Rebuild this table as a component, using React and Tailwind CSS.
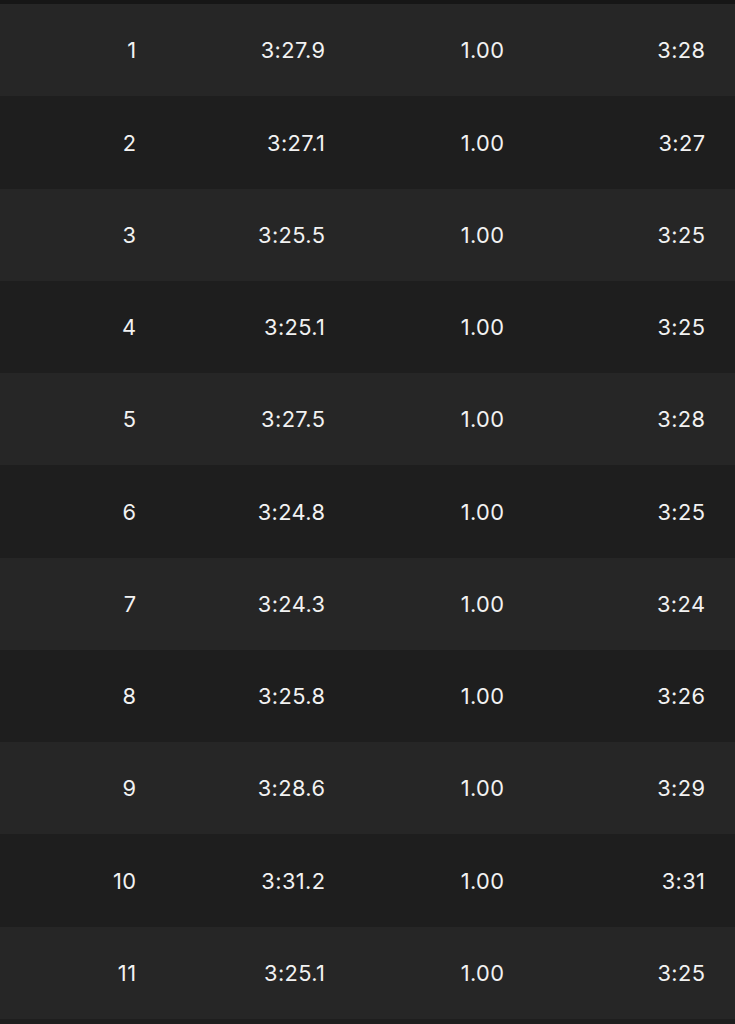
import React from "react";

const rows = [
  ["1", "3:27.9", "1.00", "3:28"],
  ["2", "3:27.1", "1.00", "3:27"],
  ["3", "3:25.5", "1.00", "3:25"],
  ["4", "3:25.1", "1.00", "3:25"],
  ["5", "3:27.5", "1.00", "3:28"],
  ["6", "3:24.8", "1.00", "3:25"],
  ["7", "3:24.3", "1.00", "3:24"],
  ["8", "3:25.8", "1.00", "3:26"],
  ["9", "3:28.6", "1.00", "3:29"],
  ["10", "3:31.2", "1.00", "3:31"],
  ["11", "3:25.1", "1.00", "3:25"],
];

export default function App() {
  return (
    <div
      className="min-h-screen bg-[#1e1e1e] text-[#f2f2f2]"
      style={{ fontFamily: "Inter, 'Open Sans', sans-serif" }}
    >
      <div className="h-[4px] bg-[#161616]" />
      {rows.map((r, i) => (
        <div
          key={i}
          className={`grid h-[92.27px] grid-cols-[136px_189px_179px_201px] items-center pt-[2px] pr-[30px] text-right text-[21.8px] leading-none tracking-[0.4px] ${
            i % 2 === 0 ? "bg-[#262626]" : "bg-[#1e1e1e]"
          }`}
        >
          <span className="-mr-[0.4px]">{r[0]}</span>
          <span className="-mr-[0.4px]">{r[1]}</span>
          <span className="-mr-[0.4px]">{r[2]}</span>
          <span className="-mr-[0.4px]">{r[3]}</span>
        </div>
      ))}
    </div>
  );
}
